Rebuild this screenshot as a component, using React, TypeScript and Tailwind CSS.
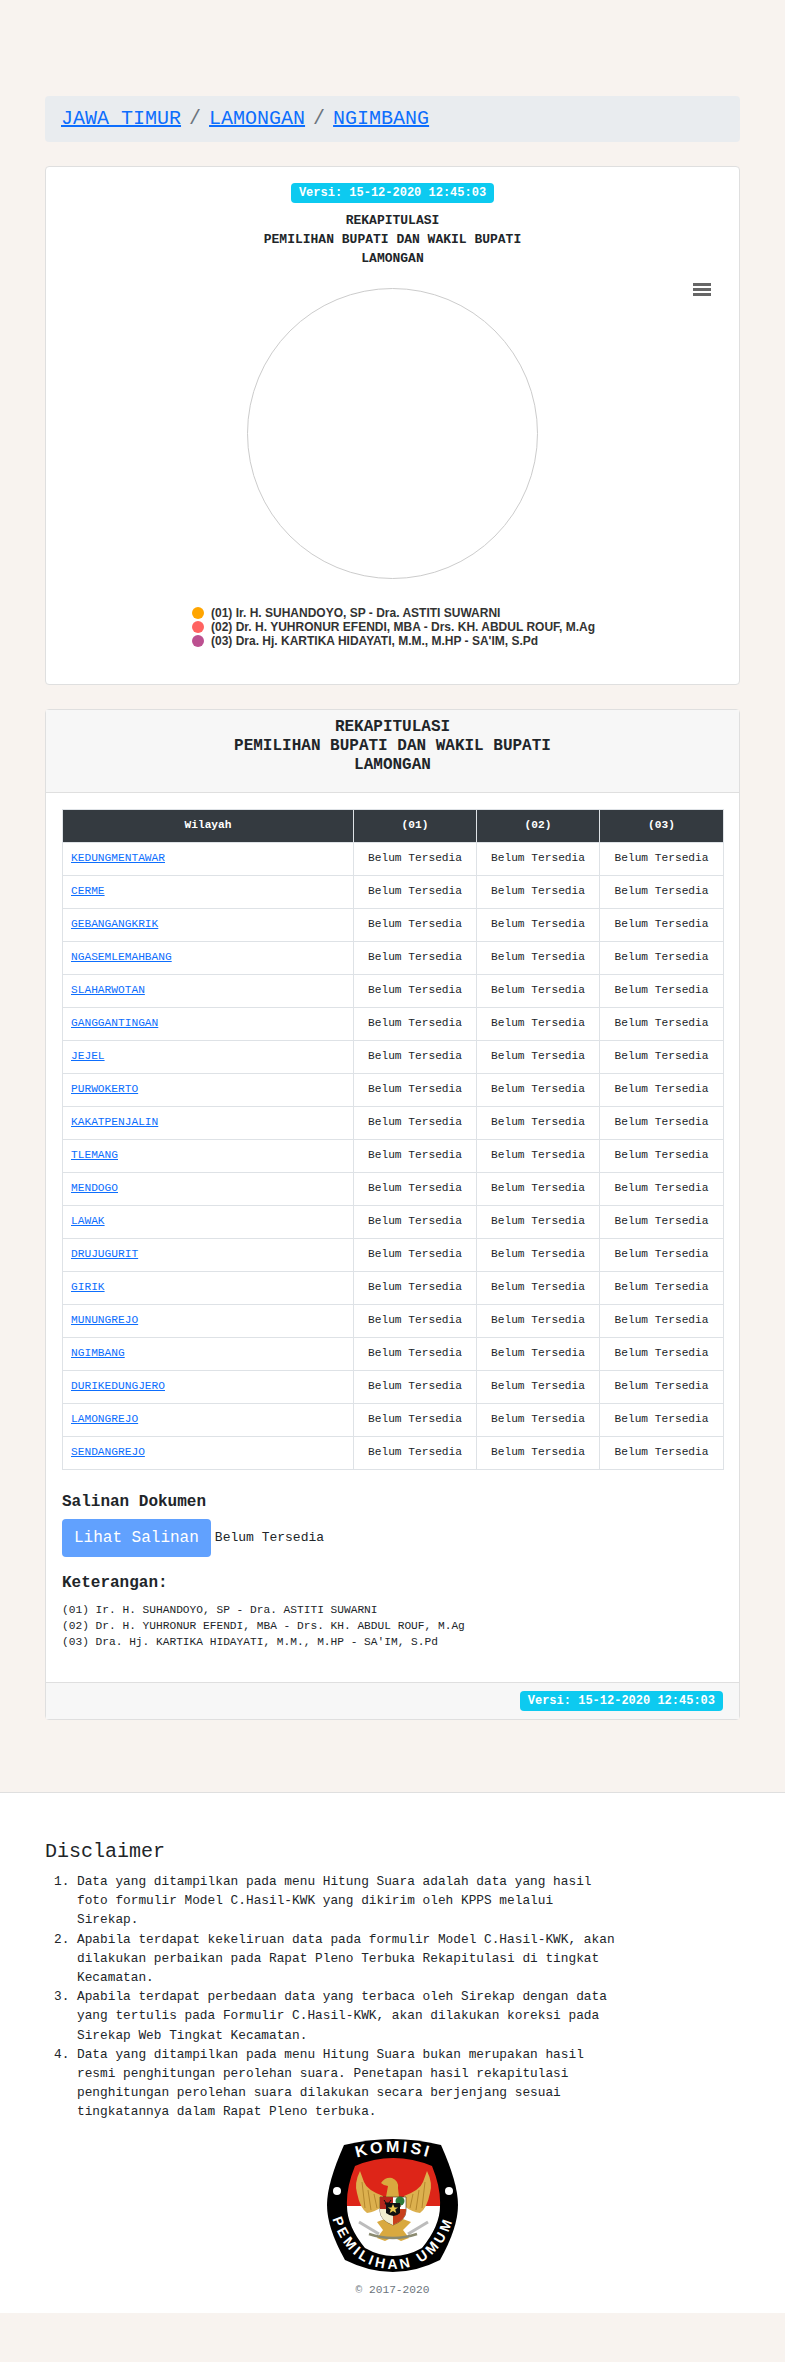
const wilayah = [
  'KEDUNGMENTAWAR',
  'CERME',
  'GEBANGANGKRIK',
  'NGASEMLEMAHBANG',
  'SLAHARWOTAN',
  'GANGGANTINGAN',
  'JEJEL',
  'PURWOKERTO',
  'KAKATPENJALIN',
  'TLEMANG',
  'MENDOGO',
  'LAWAK',
  'DRUJUGURIT',
  'GIRIK',
  'MUNUNGREJO',
  'NGIMBANG',
  'DURIKEDUNGJERO',
  'LAMONGREJO',
  'SENDANGREJO',
];

const paslon = [
  { no: '(01)', nama: 'Ir. H. SUHANDOYO, SP - Dra. ASTITI SUWARNI', dot: 'bg-[#ffa500]' },
  { no: '(02)', nama: 'Dr. H. YUHRONUR EFENDI, MBA - Drs. KH. ABDUL ROUF, M.Ag', dot: 'bg-[#ff6361]' },
  { no: '(03)', nama: "Dra. Hj. KARTIKA HIDAYATI, M.M., M.HP - SA'IM, S.Pd", dot: 'bg-[#bc5090]' },
];

const disclaimer = [
  'Data yang ditampilkan pada menu Hitung Suara adalah data yang hasil foto formulir Model C.Hasil-KWK yang dikirim oleh KPPS melalui Sirekap.',
  'Apabila terdapat kekeliruan data pada formulir Model C.Hasil-KWK, akan dilakukan perbaikan pada Rapat Pleno Terbuka Rekapitulasi di tingkat Kecamatan.',
  'Apabila terdapat perbedaan data yang terbaca oleh Sirekap dengan data yang tertulis pada Formulir C.Hasil-KWK, akan dilakukan koreksi pada Sirekap Web Tingkat Kecamatan.',
  'Data yang ditampilkan pada menu Hitung Suara bukan merupakan hasil resmi penghitungan perolehan suara. Penetapan hasil rekapitulasi penghitungan perolehan suara dilakukan secara berjenjang sesuai tingkatannya dalam Rapat Pleno terbuka.',
];

function VersiBadge() {
  return (
    <span className="rounded bg-[#0dcaf0] px-2 py-[3px] text-xs leading-[14px] font-bold text-white">
      Versi: 15-12-2020 12:45:03
    </span>
  );
}

function KpuLogo() {
  return (
    <svg width="131" height="136" viewBox="0 0 131 136">
      <defs>
        <path id="arcTop" d="M26 21 Q66 7 107 21" />
        <path id="arcBottom" d="M3 70 C8 100 28 131 66 131 C104 131 124 100 128 70" />
        <clipPath id="inner">
          <path d="M28 28 Q66 12 105 28 Q114 50 113 68 Q113 88 95 110 Q66 126 38 110 Q20 88 20 68 Q19 50 28 28Z" />
        </clipPath>
      </defs>
      <path
        d="M17 7 Q66 -5 114 7 Q131 45 131 67 Q131 90 113 122 Q66 146 18 122 Q0 90 0 67 Q0 45 17 7Z"
        fill="#000"
      />
      <g clipPath="url(#inner)">
        <rect x="0" y="0" width="131" height="68" fill="#dd2518" />
        <rect x="0" y="68" width="131" height="60" fill="#fff" />
      </g>
      <circle cx="10" cy="53" r="4" fill="#fff" />
      <circle cx="122" cy="53" r="4" fill="#fff" />
      <text fontFamily="'Liberation Sans', sans-serif" fontSize="16" fontWeight="700" fill="#fff" letterSpacing="3">
        <textPath href="#arcTop" startOffset="50%" textAnchor="middle">
          KOMISI
        </textPath>
      </text>
      <text fontFamily="'Liberation Sans', sans-serif" fontSize="14" fontWeight="700" fill="#fff" letterSpacing="3.2">
        <textPath href="#arcBottom" startOffset="50%" textAnchor="middle">
          PEMILIHAN UMUM
        </textPath>
      </text>

      {/* garuda */}
      <path d="M33 33 Q27 45 30 55 Q33 70 40 75 Q48 74 56 68 L56 58 Q40 52 37 44Z" fill="#dcb04e" />
      <path d="M100 33 Q106 45 103 55 Q100 70 93 75 Q85 74 77 68 L77 58 Q93 52 96 44Z" fill="#dcb04e" />
      <path d="M35 44 L38 70 M41 52 L44 72 M47 56 L50 70 M98 44 L95 70 M92 52 L89 72 M86 56 L83 70" stroke="#a97c25" strokeWidth="0.8" fill="none" />
      <path d="M54 45 Q58 39 65 40 Q72 43 71 50 L72 59 L59 59 L61 48 Q57 48 54 45Z" fill="#d9a93f" />
      <path d="M50 84 L60 80 L73 80 L84 84 L76 92 L82 100 L74 103 L66 99 L58 103 L50 100 L56 92Z" fill="#d9a93f" />
      <path d="M32 84 L52 96 M101 84 L81 96" stroke="#bcbcbc" strokeWidth="3" fill="none" />
      <path d="M42 96 Q66 104 90 96" stroke="#8a8a70" strokeWidth="2.5" fill="none" />

      {/* perisai */}
      <path d="M53 59 H79 V73 Q79 82 66 87 Q53 82 53 73Z" fill="#fff" stroke="#3a2a10" strokeWidth="0.6" />
      <path d="M53 59 H66 V71 H53Z" fill="#b5261c" />
      <path d="M66 71 H79 V73 Q79 82 66 87Z" fill="#c8401c" />
      <path d="M53 71 H66 V87 Q53 82 53 73Z" fill="#f3eed0" />
      <path d="M58 65 L63 65 L60 68Z M57 62 L59 65 M64 62 L62 65" stroke="#111" strokeWidth="1" fill="#111" />
      <circle cx="73" cy="63" r="4.5" fill="#2c7a3a" />
      <rect x="72.3" y="66" width="1.4" height="3" fill="#5a3a1a" />
      <path d="M59 65 H73 V75 Q67 81 59 75Z" fill="#111" />
      <path d="M66 66 l1.5 3.4 h3.6 l-2.9 2.2 1.1 3.5 -3.3 -2.1 -3.3 2.1 1.1 -3.5 -2.9 -2.2 h3.6Z" fill="#ecc94f" />
    </svg>
  );
}

export default function App() {
  return (
    <div className="min-h-[2362px] bg-[#f8f3ef] font-['Liberation_Mono',monospace] text-[#212529]">
      <div className="mx-[45px] pt-24">
        <nav className="flex h-[46px] items-center rounded bg-[#e9ecef] px-4 text-xl">
          <a href="#" className="text-[#0d6efd] underline">JAWA TIMUR</a>
          <span className="px-2 text-[#6c757d]">/</span>
          <a href="#" className="text-[#0d6efd] underline">LAMONGAN</a>
          <span className="px-2 text-[#6c757d]">/</span>
          <a href="#" className="text-[#0d6efd] underline">NGIMBANG</a>
        </nav>

        <section className="relative mt-6 h-[519px] rounded border border-[#dfdfdf] bg-white pt-4">
          <div className="flex justify-center">
            <VersiBadge />
          </div>
          <div className="mt-2 text-center text-[13px] leading-[19px] font-bold">
            <div>REKAPITULASI</div>
            <div>PEMILIHAN BUPATI DAN WAKIL BUPATI</div>
            <div>LAMONGAN</div>
          </div>
          <div className="mt-5 flex justify-center">
            <div className="h-[291px] w-[291px] rounded-full border border-[#cccccc]" />
          </div>
          <button className="absolute top-[116px] left-[647px] flex w-[18px] flex-col gap-[2px]">
            <span className="h-[3px] bg-[#666666]" />
            <span className="h-[3px] bg-[#666666]" />
            <span className="h-[3px] bg-[#666666]" />
          </button>
          <div className="mt-[27px] ml-[146px] font-['Liberation_Sans',sans-serif] text-xs leading-[14px] font-bold text-[#333333]">
            {paslon.map((p) => (
              <div key={p.no} className="flex items-center gap-[7px]">
                <span className={`h-3 w-3 rounded-full ${p.dot}`} />
                <span>{p.no} {p.nama}</span>
              </div>
            ))}
          </div>
        </section>

        <section className="mt-6 rounded border border-[#dfdfdf] bg-white">
          <div className="border-b border-[#dfdfdf] bg-[#f7f7f7] px-4 pt-2 pb-4 text-center text-base leading-[19.2px] font-bold">
            <div>REKAPITULASI</div>
            <div>PEMILIHAN BUPATI DAN WAKIL BUPATI</div>
            <div>LAMONGAN</div>
          </div>
          <div className="px-4 pt-4 pb-[32px]">
            <table className="w-[662px] table-fixed border-collapse border border-[#dee2e6] text-[11.2px]">
              <colgroup>
                <col className="w-[291px]" />
                <col className="w-[123px]" />
                <col className="w-[123px]" />
                <col />
              </colgroup>
              <thead>
                <tr className="h-[33px] bg-[#343a40] font-bold text-white">
                  <th className="border border-[#dee2e6] text-center">Wilayah</th>
                  <th className="border border-[#dee2e6] text-center">(01)</th>
                  <th className="border border-[#dee2e6] text-center">(02)</th>
                  <th className="border border-[#dee2e6] text-center">(03)</th>
                </tr>
              </thead>
              <tbody>
                {wilayah.map((w) => (
                  <tr key={w} className="h-[33px]">
                    <td className="border border-[#dee2e6] px-2">
                      <a href="#" className="text-[#0d6efd] underline">{w}</a>
                    </td>
                    <td className="border border-[#dee2e6] text-center">Belum Tersedia</td>
                    <td className="border border-[#dee2e6] text-center">Belum Tersedia</td>
                    <td className="border border-[#dee2e6] text-center">Belum Tersedia</td>
                  </tr>
                ))}
              </tbody>
            </table>

            <h5 className="mt-[23px] text-base leading-[19.2px] font-bold">Salinan Dokumen</h5>
            <div className="mt-[7px] flex items-center gap-1">
              <button className="h-[38px] rounded bg-[#61a1fe] px-3 text-base text-white">Lihat Salinan</button>
              <span className="text-[13px]">Belum Tersedia</span>
            </div>
            <h5 className="mt-[17px] text-base leading-[19.2px] font-bold">Keterangan:</h5>
            <div className="mt-[9px] text-[11.2px] leading-4">
              {paslon.map((p) => (
                <div key={p.no}>{p.no} {p.nama}</div>
              ))}
            </div>
          </div>
          <div className="flex justify-end border-t border-[#dfdfdf] bg-[#f7f7f7] px-4 py-2">
            <VersiBadge />
          </div>
        </section>
      </div>

      <footer className="mt-[72px] h-[521px] border-t border-[#dfdfdf] bg-white px-[45px] pt-[47px]">
        <h4 className="text-xl leading-6">Disclaimer</h4>
        <ol className="mt-2 w-[575px] list-decimal pl-8 text-[12.8px] leading-[19.2px]">
          {disclaimer.map((d) => (
            <li key={d}>{d}</li>
          ))}
        </ol>
        <div className="mt-4 flex justify-center">
          <KpuLogo />
        </div>
        <p className="mt-2 text-center text-[11.2px] leading-4 text-[#6c757d]">© 2017-2020</p>
      </footer>
    </div>
  );
}
